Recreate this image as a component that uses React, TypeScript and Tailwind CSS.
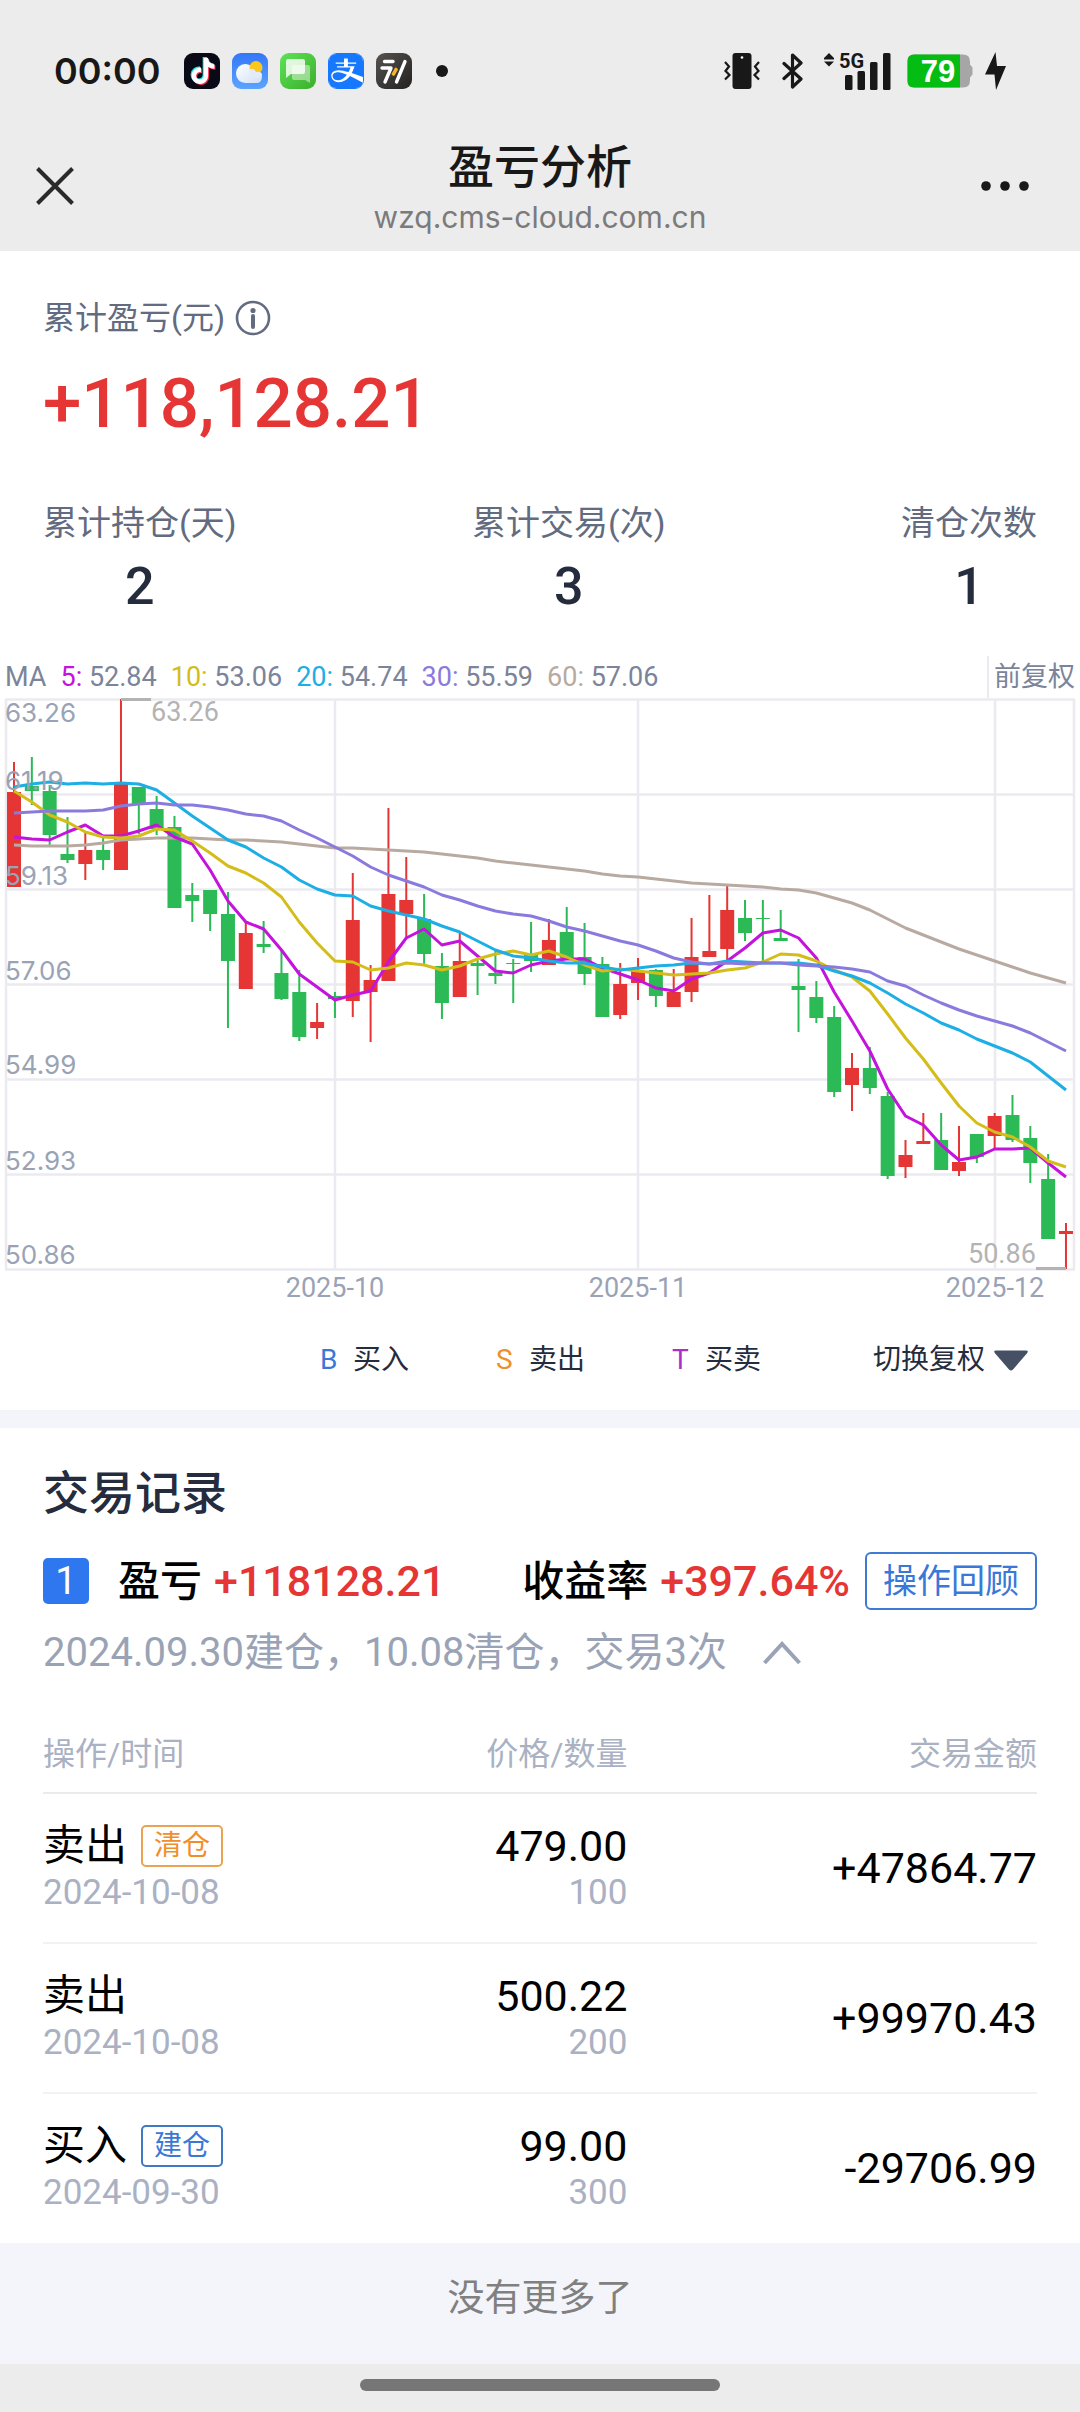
import { FaAlipay, FaTiktok } from "react-icons/fa";

const RED = "#e53534";
const GREEN = "#2cba57";

const CANDLE_STEP = 17.83;
const candleX = (i: number) => 14 + i * CANDLE_STEP;

// [up, high, body top, body bottom, low], measured down from the top grid line
const CANDLES: [number, number, number, number, number][] = [
  [1, 63, 93, 188, 188], [0, 58, 87, 92, 106], [0, 86, 92, 136, 146], [0, 118, 155, 161, 164],
  [1, 134, 151, 165, 181], [0, 136, 151, 161, 171], [1, 0, 85, 171, 171], [0, 88, 88, 105, 135],
  [0, 97, 110, 130, 136], [0, 117, 128, 209, 209], [0, 184, 196, 202, 223], [0, 191, 191, 215, 232],
  [0, 193, 215, 262, 329], [1, 223, 234, 290, 290], [0, 222, 245, 248, 254], [0, 251, 274, 300, 301],
  [0, 271, 293, 338, 342], [1, 304, 323, 329, 340], [0, 293, 297, 300, 319], [1, 174, 221, 302, 318],
  [1, 266, 281, 293, 343], [1, 109, 195, 282, 282], [1, 158, 201, 215, 238], [0, 195, 220, 255, 265],
  [0, 254, 267, 304, 320], [1, 233, 262, 298, 298], [0, 261, 264, 267, 296], [0, 251, 274, 277, 285],
  [0, 260, 264, 265, 304], [0, 223, 256, 262, 273], [1, 220, 241, 266, 266], [0, 208, 233, 259, 259],
  [0, 224, 258, 275, 286], [0, 258, 265, 318, 318], [1, 264, 285, 316, 320], [1, 259, 272, 284, 301],
  [0, 270, 271, 297, 308], [1, 270, 293, 308, 308], [1, 219, 258, 293, 303], [1, 196, 252, 258, 258],
  [1, 187, 211, 250, 261], [0, 201, 219, 234, 242], [0, 201, 219, 220, 263], [0, 211, 239, 242, 242],
  [0, 260, 287, 291, 333], [0, 282, 298, 319, 324], [0, 307, 318, 393, 398], [1, 354, 369, 386, 412],
  [0, 348, 369, 389, 395], [0, 393, 397, 477, 480], [1, 441, 456, 468, 479], [1, 414, 442, 445, 445],
  [0, 414, 441, 471, 471], [1, 427, 463, 472, 477], [0, 435, 435, 458, 464], [1, 414, 417, 437, 451],
  [0, 396, 416, 441, 443], [0, 427, 439, 464, 484], [0, 455, 480, 540, 540], [1, 524, 532, 535, 570],
];

const AVERAGES = [
  {
    period: "60",
    value: "57.06",
    color: "#b8aaa0",
    points: [
      146, 147, 147, 147, 146, 144, 141, 140, 139, 139, 139, 140, 141, 141, 142, 143, 145, 147, 149, 149,
      150, 151, 152, 153, 155, 157, 159, 162, 164, 166, 168, 170, 172, 175, 177, 178, 180, 182, 184, 185,
      186, 187, 188, 190, 191, 194, 199, 204, 211, 220, 229, 236, 243, 250, 256, 262, 268, 274, 279, 284,
    ],
  },
  {
    period: "5",
    value: "52.84",
    color: "#c413dc",
    points: [
      138, 140, 141, 133, 126, 137, 137, 132, 126, 138, 145, 171, 202, 223, 230, 251, 275, 288, 301, 296,
      292, 263, 239, 230, 246, 242, 257, 272, 274, 266, 262, 260, 260, 269, 275, 281, 289, 292, 280, 274,
      262, 249, 234, 231, 239, 259, 293, 322, 352, 390, 417, 426, 446, 461, 458, 450, 450, 449, 464, 478,
    ],
  },
  {
    period: "10",
    value: "53.06",
    color: "#d4bd19",
    points: [
      92, 103, 116, 123, 133, 138, 139, 137, 130, 131, 142, 154, 167, 174, 184, 198, 223, 244, 262, 263,
      271, 269, 264, 266, 271, 267, 260, 255, 252, 256, 252, 258, 266, 272, 270, 272, 274, 276, 275, 274,
      271, 269, 263, 255, 256, 262, 271, 278, 292, 315, 339, 360, 384, 407, 424, 433, 438, 448, 462, 468,
    ],
  },
  {
    period: "20",
    value: "54.74",
    color: "#1caee5",
    points: [
      88, 85, 83, 85, 84, 85, 84, 85, 91, 104, 117, 129, 141, 148, 159, 168, 181, 190, 196, 197,
      207, 212, 216, 220, 227, 233, 242, 251, 257, 259, 262, 264, 264, 268, 271, 269, 267, 266, 264, 265,
      262, 263, 264, 264, 264, 266, 272, 277, 284, 294, 305, 314, 324, 331, 340, 347, 354, 363, 377, 391,
    ],
  },
  {
    period: "30",
    value: "55.59",
    color: "#8a7ade",
    points: [
      114, 113, 112, 112, 112, 111, 107, 105, 104, 106, 106, 108, 111, 115, 117, 122, 131, 139, 148, 157,
      168, 176, 182, 188, 196, 201, 207, 212, 215, 217, 222, 228, 232, 237, 242, 246, 252, 259, 263, 265,
      264, 265, 264, 264, 266, 267, 268, 270, 273, 282, 287, 296, 304, 311, 317, 322, 327, 334, 343, 352,
    ],
  },
];

const MA_LABELS = ["5", "10", "20", "30", "60"].map((p) => AVERAGES.find((a) => a.period === p)!);

const GRID_Y = [0, 95, 190, 285, 380, 475, 570];
const PRICE_LABELS: [string, number][] = [
  ["63.26", 23],
  ["61.19", 91],
  ["59.13", 186],
  ["57.06", 281],
  ["54.99", 375],
  ["52.93", 471],
  ["50.86", 565],
];
const MONTHS: [string, number][] = [
  ["2025-10", 335],
  ["2025-11", 638],
  ["2025-12", 995],
];

const STATS = [
  { label: "累计持仓(天)", value: "2" },
  { label: "累计交易(次)", value: "3" },
  { label: "清仓次数", value: "1" },
];

const MARKS = [
  { letter: "B", text: "买入", color: "text-[#3a78d8]" },
  { letter: "S", text: "卖出", color: "text-[#f08e2c]" },
  { letter: "T", text: "买卖", color: "text-[#a832c8]" },
];

const TRADES = [
  { action: "卖出", tag: "清仓", tagColor: "border-[#eba252] text-[#f08e2c]", date: "2024-10-08", price: "479.00", qty: "100", amount: "+47864.77" },
  { action: "卖出", tag: "", tagColor: "", date: "2024-10-08", price: "500.22", qty: "200", amount: "+99970.43" },
  { action: "买入", tag: "建仓", tagColor: "border-[#4079c4] text-[#3a78d8]", date: "2024-09-30", price: "99.00", qty: "300", amount: "-29706.99" },
];

export default function App() {
  return (
    <div className="min-h-screen bg-white font-['Roboto','Noto_Sans_CJK_SC',sans-serif] text-black">
      <header className="bg-[#ececec] pt-[53px] pb-[15px]">
        <StatusBar />
        <div className="mt-[47px] flex h-[100px] items-center justify-between px-[36px]">
          <button type="button" aria-label="关闭" className="flex w-[76px] items-center">
            <svg viewBox="0 0 38 38" className="size-[38px]" stroke="#2a2a2a" strokeWidth="4">
              <path d="M1.500 1.500 36.500 36.500M36.500 1.500 1.500 36.500" />
            </svg>
          </button>
          <div className="mt-[8px] text-center">
            <h1 className="text-[46px] leading-[54px] font-medium text-[#181818]">盈亏分析</h1>
            <p className="font-['Inter',sans-serif] text-[30px] leading-[46px] text-[#7b7b7b]">wzq.cms-cloud.com.cn</p>
          </div>
          <button type="button" aria-label="更多" className="flex w-[76px] items-center justify-end pr-[15px]">
            <svg viewBox="0 0 48 10" className="h-[10px] w-[48px]" fill="#181818">
              <circle cx="5" cy="5" r="4.800" />
              <circle cx="24" cy="5" r="4.800" />
              <circle cx="43" cy="5" r="4.800" />
            </svg>
          </button>
        </div>
      </header>

      <section className="px-[43px] pt-[45px]">
        <div className="flex items-center gap-[10px] text-[32px] leading-[44px] text-[#626b80]">
          累计盈亏(元)
          <button type="button" aria-label="说明">
            <svg viewBox="0 0 36 36" className="size-[36px]" fill="none" stroke="#626b80">
              <circle cx="18" cy="18" r="16" strokeWidth="2.600" />
              <path d="M18 16v11" strokeWidth="4" strokeLinecap="round" />
              <circle cx="18" cy="10.500" r="2.600" fill="#626b80" stroke="none" />
            </svg>
          </button>
        </div>
        <p className="mt-[24px] text-[69px] leading-[80px] font-medium text-[#e53534]">+118,128.21</p>
        <dl className="mt-[55px] flex justify-between">
          {STATS.map((s) => (
            <div key={s.label} className="text-center">
              <dt className="text-[34px] leading-[48px] text-[#626b80]">{s.label}</dt>
              <dd className="mt-[10px] text-[52px] leading-[60px] font-medium text-[#252c3e]">{s.value}</dd>
            </div>
          ))}
        </dl>
      </section>

      <section className="mt-[39px]">
        <div className="flex h-[42px] justify-between pl-[5px] text-[27px] leading-[42px] text-[#7b8499]">
          <div className="flex gap-[14px]">
            <span>MA</span>
            {MA_LABELS.map((a) => (
              <span key={a.period}>
                <span style={{ color: a.color }}>{a.period}:</span> {a.value}
              </span>
            ))}
          </div>
          <div className="border-l-2 border-[#eaeaf0] pr-[5px] pl-[5px]">前复权</div>
        </div>
        <Chart />
        <div className="mt-[30px] flex items-center justify-end pr-[52px] pb-[30px] text-[28px] leading-[40px] text-[#252c3e]">
          <ul className="flex gap-[87px]">
            {MARKS.map((m) => (
              <li key={m.letter} className="flex">
                <span className={`w-[33px] ${m.color}`}>{m.letter}</span>
                {m.text}
              </li>
            ))}
          </ul>
          <button type="button" className="ml-[112px] flex items-center gap-[9px]">
            切换复权
            <svg viewBox="0 0 34 21" className="h-[21px] w-[34px]" fill="#465065">
              <path d="M2 0.500h30q3 0 1 2.700L19 19.500q-2 1.800-4 0L1 3.200Q-1 0.500 2 0.500z" />
            </svg>
          </button>
        </div>
      </section>

      <section className="border-t-[18px] border-[#f4f5fa] px-[43px] pt-[37px]">
        <h2 className="text-[46px] leading-[56px] font-medium text-[#252c3e]">交易记录</h2>
        <div className="mt-[31px] flex h-[58px] items-center text-[42px] font-medium whitespace-nowrap">
          <span className="flex h-[46px] w-[46px] items-center justify-center rounded-[5px] bg-[#2e77ee] text-[38px] font-normal text-white">
            1
          </span>
          <span className="ml-[29px]">盈亏</span>
          <span className="ml-[12px] text-[43px] text-[#e53534]">+118128.21</span>
          <span className="ml-auto">收益率</span>
          <span className="ml-[12px] text-[43px] text-[#e53534]">+397.64%</span>
          <button
            type="button"
            className="ml-[15px] h-[58px] rounded-[6px] border-2 border-[#3f7ad2] px-[16px] text-[34px] font-normal text-[#3a78d8]"
          >
            操作回顾
          </button>
        </div>
        <button type="button" className="mt-[15px] flex items-center gap-[36px] text-[40px] leading-[56px] text-[#9aa3b5]">
          2024.09.30建仓，10.08清仓，交易3次
          <svg viewBox="0 0 38 24" className="h-[24px] w-[38px]" fill="none" stroke="#9aa3b5" strokeWidth="4">
            <path d="M1.500 22 19 3 36.500 22" />
          </svg>
        </button>

        <table className="mt-[35px] w-full table-fixed">
          <thead className="text-[32px] leading-[44px] text-[#a9b1c3]">
            <tr className="h-[77px] border-b-2 border-[#ebebed]">
              <th className="w-[30%] text-left font-normal">操作/时间</th>
              <th className="w-[29%] pr-0.5 text-right font-normal">价格/数量</th>
              <th className="text-right font-normal">交易金额</th>
            </tr>
          </thead>
          <tbody>
            {TRADES.map((t) => (
              <tr key={t.amount} className="h-[150px] border-b-2 border-[#f2f2f4] last:border-0">
                <td className="pt-[24px] align-top">
                  <div className="flex items-center gap-[14px] text-[42px] leading-[56px]">
                    {t.action}
                    {t.tag && (
                      <span className={`rounded-[5px] border-2 px-[11px] text-[28px] leading-[38px] ${t.tagColor}`}>{t.tag}</span>
                    )}
                  </div>
                  <div className="text-[35px] leading-[38px] text-[#a9b1c3]">{t.date}</div>
                </td>
                <td className="pt-[24px] pr-0.5 text-right align-top">
                  <div className="text-[43px] leading-[56px]">{t.price}</div>
                  <div className="text-[35px] leading-[38px] text-[#a9b1c3]">{t.qty}</div>
                </td>
                <td className="text-right align-middle text-[43px]">{t.amount}</td>
              </tr>
            ))}
          </tbody>
        </table>
      </section>

      <p className="bg-[#f4f5fa] pt-[31px] pb-[40px] text-center text-[37px] leading-[50px] text-[#808080]">没有更多了</p>
      <footer className="flex h-[48px] justify-center bg-[#ececec] pt-[15px]">
        <div className="h-[12px] w-1/3 rounded-full bg-[#767676]" />
      </footer>
    </div>
  );
}

function Chart() {
  return (
    <svg viewBox="0 -1 1080 612" className="block w-full overflow-visible" role="img" aria-label="K线图">
      <g stroke="#eaeaf0" strokeWidth="2.500">
        {GRID_Y.map((y) => (
          <path key={y} d={`M5 ${y + 0.5}H1075`} />
        ))}
        {[6, 335, 638, 995, 1074].map((x) => (
          <path key={x} d={`M${x} 0V570`} />
        ))}
      </g>

      {CANDLES.map(([up, high, top, bottom, low], i) => (
        <g key={i} fill={up ? RED : GREEN}>
          <rect x={candleX(i) - 1} y={high} width="2" height={low - high} />
          <rect x={Math.max(candleX(i) - 7, 6)} y={top} width="14" height={bottom - top} />
        </g>
      ))}

      {AVERAGES.map((a) => (
        <polyline
          key={a.period}
          fill="none"
          stroke={a.color}
          strokeWidth="3"
          strokeLinejoin="round"
          points={a.points.map((y, i) => `${candleX(i)},${y}`).join(" ")}
        />
      ))}

      <g fill="#9aa3b5" className="font-['Inter',sans-serif] text-[26px]">
        {PRICE_LABELS.map(([label, y]) => (
          <text key={label} x="5" y={y}>
            {label}
          </text>
        ))}
      </g>
      <g fill="#9aa3b5" className="text-[27px]" textAnchor="middle">
        {MONTHS.map(([label, x]) => (
          <text key={label} x={x} y="598">
            {label}
          </text>
        ))}
      </g>

      <g fill="#b3b3b3" className="text-[27px]">
        <path d="M121 -1h30v3h-30zM1036 568h30v3h-30z" />
        <text x="151" y="22">63.26</text>
        <text x="968" y="564">50.86</text>
      </g>
    </svg>
  );
}

function StatusBar() {
  return (
    <div className="flex h-[36px] items-center pr-[74px] pl-[54px] font-['Inter',sans-serif]">
      <span className="w-[106px] text-[36px] font-semibold text-[#181818]">00:00</span>
      <div className="ml-[24px] flex gap-[12px]">
        <span className="relative size-[36px] rounded-[9px] bg-[#0a0a16]">
          <FaTiktok className="absolute top-[4px] left-[5px] size-[26px] text-[#25e6e6]" />
          <FaTiktok className="absolute top-[6px] left-[7px] size-[26px] text-[#f83358]" />
          <FaTiktok className="absolute top-[5px] left-[6px] size-[26px] text-white" />
        </span>
        <svg viewBox="0 0 36 36" className="size-[36px]">
          <defs>
            <linearGradient id="sky" x2="0" y2="1">
              <stop stopColor="#3377f8" />
              <stop offset="1" stopColor="#5ba4ff" />
            </linearGradient>
            <linearGradient id="cloud" x2="1" y2="1">
              <stop stopColor="#fff" />
              <stop offset="1" stopColor="#cfdff8" />
            </linearGradient>
          </defs>
          <rect width="36" height="36" rx="9" fill="url(#sky)" />
          <path d="M13 11a8 8 0 0 1 8 6q9-1 9 6.500t-7 6.500H13A9 9.500 0 0 1 13 11z" fill="url(#cloud)" />
          <circle cx="24" cy="14.500" r="6.500" fill="#fdc71c" />
          <path d="M18 16q4-1 6 3 3-1 6 2-1 4-5 4l-7-3z" fill="#e3ebf9" />
        </svg>
        <svg viewBox="0 0 36 36" className="size-[36px]">
          <defs>
            <linearGradient id="chat" x2="1" y2="1">
              <stop stopColor="#5de356" />
              <stop offset="1" stopColor="#3cae2c" />
            </linearGradient>
          </defs>
          <rect width="36" height="36" rx="9" fill="url(#chat)" />
          <path d="M14 12h14q2 0 2 2v16l-5-3H14q-2 0-2-2V14q0-2 2-2z" fill="#fff" opacity="0.450" />
          <path d="M8 6h15q2 0 2 2v11q0 2-2 2H11l-5 4V8q0-2 2-2z" fill="#fff" opacity="0.820" />
        </svg>
        <span className="flex size-[36px] items-center justify-center rounded-[9px] bg-[#1677ff]">
          <span className="overflow-hidden rounded-[7px] bg-white">
            <FaAlipay viewBox="0 32 448 448" className="size-[34px] text-[#1677ff]" />
          </span>
        </span>
        <svg viewBox="0 0 36 36" className="size-[36px]" fill="none" strokeLinecap="round">
          <defs>
            <linearGradient id="slate" x2="1" y2="1">
              <stop stopColor="#555250" />
              <stop offset="1" stopColor="#242220" />
            </linearGradient>
          </defs>
          <rect width="36" height="36" rx="9" fill="url(#slate)" />
          <path d="M8.500 8.500H17M6 15H15L9 29M29 8.500 20.500 29" stroke="#fff" strokeWidth="3.400" strokeLinejoin="round" />
          <path d="M20 16.500 17.500 21" stroke="#f5b52c" strokeWidth="3.600" />
        </svg>
      </div>
      <span className="ml-[24px] size-[12px] rounded-full bg-[#181818]" />

      <div className="ml-auto flex items-center text-[#181818]">
        <svg viewBox="0 0 36 36" className="size-[36px]" fill="none" stroke="#181818" strokeWidth="2.200">
          <rect x="8.500" y="0" width="19" height="36" rx="3" fill="#181818" stroke="none" />
          <circle cx="18" cy="4.500" r="1.300" fill="#fff" stroke="none" />
          <path d="M1 9l4 4.500L1.500 18l4 4L1 26.500M35 9l-4 4.500 3.500 4.500-4 4 4.500 4.500" />
        </svg>
        <svg
          viewBox="0 0 22 36"
          className="ml-[22px] h-[36px] w-[22px]"
          fill="none"
          stroke="#181818"
          strokeWidth="3.200"
          strokeLinejoin="round"
          strokeLinecap="round"
        >
          <path d="M2 10.500 19 26 10.500 34V2L19 10 2 25.500" />
        </svg>
        <svg viewBox="0 0 67 37" className="ml-[20px] h-[37px] w-[67px] overflow-visible" fill="#181818">
          <path d="M5 0l5 5H0zM0 8.500h10l-5 5zM0 5h10v1.500H0z" />
          <text x="15" y="15" className="font-['Roboto',sans-serif] text-[20px] font-bold">5G</text>
          <rect x="21" y="22" width="7.500" height="15" rx="1.500" />
          <rect x="33.500" y="18" width="7.500" height="19" rx="1.500" />
          <rect x="46" y="9" width="7.500" height="28" rx="1.500" />
          <rect x="59" y="0" width="7.500" height="37" rx="1.500" />
        </svg>
        <svg viewBox="0 0 66 34" className="ml-[16px] h-[34px] w-[66px]">
          <path d="M7 0.500h49q7 0 7 7v3l2.500 3v7l-2.500 3v3q0 7-7 7H7q-6.500 0-6.500-6.500v-20Q0.500 0.500 7 0.500z" fill="#a6a6a6" />
          <path d="M7 0.500h46v33H7q-6.500 0-6.500-6.500V7Q0.500 0.500 7 0.500z" fill="#04bd12" />
          <text x="31" y="28" fill="#fff" textAnchor="middle" className="font-['Liberation_Sans',sans-serif] text-[31px] font-bold">
            79
          </text>
        </svg>
        <svg viewBox="0 0 21 38" className="ml-[12px] h-[38px] w-[21px]" fill="#181818">
          <path d="M10.500 0 0 22.500h9.500L11 38 21 14h-9z" />
        </svg>
      </div>
    </div>
  );
}
